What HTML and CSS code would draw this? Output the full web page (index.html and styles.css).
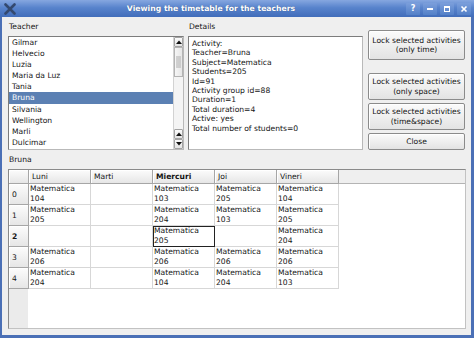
FILE: index.html
```html
<!DOCTYPE html>
<html lang="en">
<head>
  <meta charset="UTF-8" />
  <meta name="viewport" content="width=device-width,initial-scale=1" />
  <title>Viewing the timetable for the teachers</title>
  <link rel="stylesheet" href="styles.css">
</head>
<body>

  <div class="window">
    <div class="titlebar">
      <svg class="app-icon" width="12" height="12" viewBox="0 0 12 12">
        <path d="M1.5 1.5 L10.5 10.5 M10.5 1.5 L1.5 10.5" stroke="#34496f" stroke-width="2.6" stroke-linecap="round"/>
      </svg>
      <div class="title">Viewing the timetable for the teachers</div>
      <div class="title-buttons">
        <span class="tb">?</span>
        <span class="tb">
          <svg width="8" height="8" viewBox="0 0 8 8"><rect x="1" y="3" width="6" height="2" fill="#fff"/></svg>
        </span>
        <span class="tb">
          <svg width="8" height="8" viewBox="0 0 8 8"><rect x="1.5" y="1.5" width="5" height="5" fill="none" stroke="#fff" stroke-width="1"/><rect x="1" y="1" width="6" height="2" fill="#fff"/></svg>
        </span>
        <span class="tb">
          <svg width="8" height="8" viewBox="0 0 8 8"><path d="M1.5 1.5 L6.5 6.5 M6.5 1.5 L1.5 6.5" stroke="#fff" stroke-width="1.6"/></svg>
        </span>
      </div>
    </div>

    <div class="frame">
      <div class="top">
        <div class="group teacher">
          <div class="label">Teacher</div>
          <div class="listbox">
            <ul class="items">
              <li>Gilmar</li>
              <li>Helvecio</li>
              <li>Luzia</li>
              <li>Maria da Luz</li>
              <li>Tania</li>
              <li class="selected">Bruna</li>
              <li>Silvania</li>
              <li>Wellington</li>
              <li>Marli</li>
              <li>Dulcimar</li>
            </ul>
            <div class="scrollbar">
              <div class="sb-btn">
                <svg width="6" height="4" viewBox="0 0 6 4"><path d="M0 4 L3 0.5 L6 4 Z" fill="#111"/></svg>
              </div>
              <div class="sb-handle"><span class="grip"></span></div>
              <div class="sb-trough"></div>
              <div class="sb-btn">
                <svg width="6" height="4" viewBox="0 0 6 4"><path d="M0 4 L3 0.5 L6 4 Z" fill="#111"/></svg>
              </div>
              <div class="sb-btn">
                <svg width="6" height="4" viewBox="0 0 6 4"><path d="M0 0 L3 3.5 L6 0 Z" fill="#111"/></svg>
              </div>
            </div>
          </div>
        </div>

        <div class="group details">
          <div class="label">Details</div>
          <div class="textbox">
            Activity:<br>
            Teacher=Bruna<br>
            Subject=Matematica<br>
            Students=205<br>
            Id=91<br>
            Activity group id=88<br>
            Duration=1<br>
            Total duration=4<br>
            Active: yes<br>
            Total number of students=0
          </div>
        </div>

        <div class="actions">
          <button class="btn tall">Lock selected activities<br>(only time)</button>
          <button class="btn spaced">Lock selected activities<br>(only space)</button>
          <button class="btn">Lock selected activities<br>(time&amp;space)</button>
          <button class="btn close">Close</button>
        </div>
      </div>

      <div class="label bottom-label">Bruna</div>

      <div class="grid-frame">
        <div class="grid-row head">
          <div class="corner"></div>
          <div class="hcell">Luni</div>
          <div class="hcell">Marti</div>
          <div class="hcell current">Miercuri</div>
          <div class="hcell">Joi</div>
          <div class="hcell">Vineri</div>
          <div class="hfill"></div>
        </div>
        <div class="grid-row">
          <div class="vhead">0</div>
          <div class="cell">Matematica<br>104</div>
          <div class="cell"></div>
          <div class="cell">Matematica<br>103</div>
          <div class="cell">Matematica<br>205</div>
          <div class="cell">Matematica<br>104</div>
        </div>
        <div class="grid-row">
          <div class="vhead">1</div>
          <div class="cell">Matematica<br>205</div>
          <div class="cell"></div>
          <div class="cell">Matematica<br>204</div>
          <div class="cell">Matematica<br>103</div>
          <div class="cell">Matematica<br>205</div>
        </div>
        <div class="grid-row">
          <div class="vhead current">2</div>
          <div class="cell"></div>
          <div class="cell"></div>
          <div class="cell current">Matematica<br>205</div>
          <div class="cell"></div>
          <div class="cell">Matematica<br>204</div>
        </div>
        <div class="grid-row">
          <div class="vhead">3</div>
          <div class="cell">Matematica<br>206</div>
          <div class="cell"></div>
          <div class="cell">Matematica<br>206</div>
          <div class="cell">Matematica<br>206</div>
          <div class="cell">Matematica<br>206</div>
        </div>
        <div class="grid-row">
          <div class="vhead">4</div>
          <div class="cell">Matematica<br>204</div>
          <div class="cell"></div>
          <div class="cell">Matematica<br>104</div>
          <div class="cell">Matematica<br>204</div>
          <div class="cell">Matematica<br>103</div>
        </div>
      </div>
    </div>
  </div>

</body>
</html>
```

FILE: styles.css
```css
* {
  box-sizing: border-box;
}
html, body {
  margin: 0;
  padding: 0;
}
body {
  font-family: "DejaVu Sans", sans-serif;
  font-size: 7.6px;
  color: #141414;
  background: #efefef;
}
.window {
  width: 474px;
  height: 338px;
  display: flex;
  flex-direction: column;
}

/* title bar */
.titlebar {
  height: 17px;
  flex: none;
  display: flex;
  align-items: center;
  padding: 0 3px;
  background: linear-gradient(#86a7e0, #5883cc 45%, #416dba);
  color: #fff;
}
.app-icon {
  flex: none;
  margin-left: 1px;
}
.title {
  flex: 1;
  text-align: center;
  font-weight: bold;
  font-size: 7.7px;
  text-shadow: 0 0 1px rgba(0,0,0,.35);
}
.title-buttons {
  display: flex;
  gap: 3px;
}
.tb {
  width: 14px;
  height: 12px;
  display: flex;
  align-items: center;
  justify-content: center;
  background: linear-gradient(#7b9edb, #5380c8);
  border-radius: 1px;
  font-weight: bold;
  font-size: 8px;
}

/* dialog body */
.frame {
  flex: 1;
  display: flex;
  flex-direction: column;
  background: #efefef;
  border: solid #4b70b6;
  border-width: 0 3px 3px 2px;
  padding: 0 5px 6px 6px;
}
.top {
  display: flex;
  align-items: flex-start;
}
.group {
  display: flex;
  flex-direction: column;
  padding-top: 4px;
}
.teacher {
  width: 176px;
}
.details {
  width: 175px;
  margin-left: 4px;
}
.label {
  height: 11px;
  line-height: 11px;
  margin-bottom: 4px;
  padding-left: 1px;
}

/* teacher list */
.listbox {
  height: 114px;
  display: flex;
  background: #fff;
  border: 1px solid;
  border-color: #7c7c7c #b9b9b9 #b9b9b9 #7c7c7c;
}
.items {
  list-style: none;
  margin: 0;
  padding: 0;
  flex: 1;
}
.items li {
  height: 11.1px;
  line-height: 11.1px;
  padding-left: 3px;
}
.items li.selected {
  background: #5b80b3;
  color: #fff;
}
.scrollbar {
  width: 10px;
  display: flex;
  flex-direction: column;
  background: #f4f4f4;
  border-left: 1px solid #d2d2d2;
}
.sb-btn {
  height: 10px;
  display: flex;
  align-items: center;
  justify-content: center;
  background: linear-gradient(#fbfbfb, #e4e4e4);
  border: 1px solid #a3a3a3;
  border-radius: 1px;
}
.sb-handle {
  height: 30px;
  display: flex;
  align-items: center;
  justify-content: center;
  background: linear-gradient(to right, #f6f6f6, #e6e6e6);
  border: 1px solid #b3b3b3;
}
.grip {
  width: 5px;
  height: 12px;
  background-image: radial-gradient(circle, #a8a8a8 0.6px, transparent 0.8px);
  background-size: 2px 2px;
}
.sb-trough {
  flex: 1;
}

/* details text */
.textbox {
  height: 114px;
  background: #fff;
  border: 1px solid;
  border-color: #7c7c7c #b9b9b9 #b9b9b9 #7c7c7c;
  padding: 2px 3px;
  line-height: 9.4px;
}

/* buttons */
.actions {
  width: 97px;
  margin-left: 5px;
  padding-top: 13px;
  display: flex;
  flex-direction: column;
}
.btn {
  font: inherit;
  color: inherit;
  line-height: 9.5px;
  height: 27px;
  margin-top: 3px;
  padding: 0;
  border: 1px solid #8b8b8b;
  border-radius: 2px;
  background: linear-gradient(#fbfbfb, #e3e3e3);
  box-shadow: inset 1px 1px 0 #fff;
}
.btn.tall {
  height: 30px;
  margin-top: 0;
}
.btn.spaced {
  margin-top: 13px;
}
.btn.close {
  height: 17px;
}

.bottom-label {
  margin-top: 4px;
}

/* timetable grid */
.grid-frame {
  flex: 1;
  border: 1px solid;
  border-color: #8a8a8a #c2c2c2 #c2c2c2 #8a8a8a;
  background: linear-gradient(to right, #ebebeb 19px, #fff 19px);
}
.grid-row {
  display: flex;
  height: 21px;
}
.grid-row.head {
  height: 14px;
}
.corner,
.hcell,
.vhead {
  background: linear-gradient(#fcfcfc, #e6e6e6);
  border-right: 1px solid #a6a6a6;
  border-bottom: 1px solid #a6a6a6;
  box-shadow: inset 1px 1px 0 #fff;
}
.corner {
  width: 20px;
}
.hcell {
  width: 62px;
  line-height: 13px;
  padding-left: 3px;
}
.hfill {
  flex: 1;
  background: #efefef;
  border-bottom: 1px solid #b4b4b4;
}
.vhead {
  width: 20px;
  display: flex;
  align-items: center;
  padding-left: 3px;
}
.current {
  font-weight: bold;
}
.cell {
  width: 62px;
  line-height: 10px;
  padding-left: 1px;
  border-right: 1px solid #d7d7d7;
  border-bottom: 1px solid #d7d7d7;
}
.cell.current {
  font-weight: normal;
  outline: 1px solid #222;
  outline-offset: -1px;
}
```
